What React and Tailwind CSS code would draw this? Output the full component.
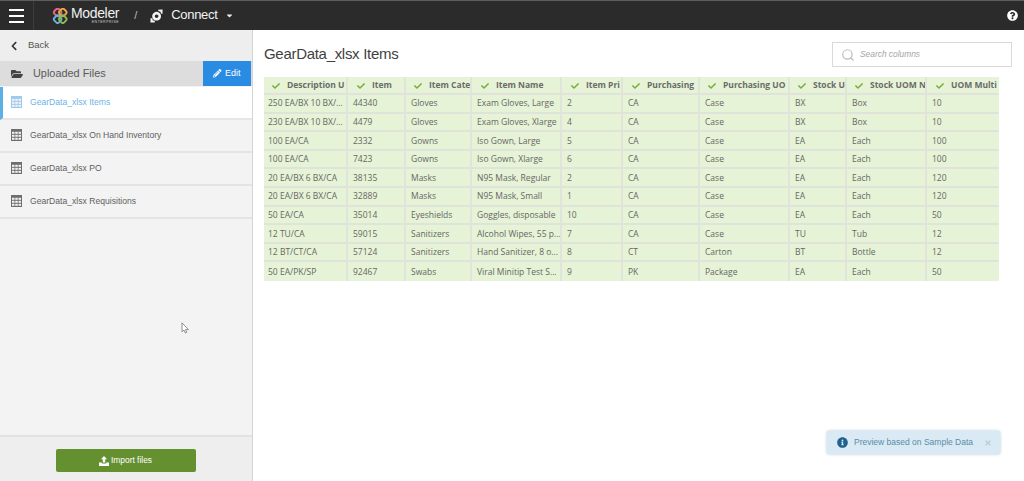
import React from "react";
import { FaCheck, FaPencilAlt, FaFolderOpen, FaChevronLeft, FaInfoCircle, FaQuestionCircle, FaTimes, FaCaretDown } from "react-icons/fa";
import { LuSearch } from "react-icons/lu";

const cols = [
  ["Description U", "pl-[8px]"],
  ["Item", "pl-[9px]"],
  ["Item Cate", "pl-[8px]"],
  ["Item Name", "pl-[9px]"],
  ["Item Pri", "pl-[9px]"],
  ["Purchasing", "pl-[9px]"],
  ["Purchasing UO", "pl-[8px]"],
  ["Stock U", "pl-[8px]"],
  ["Stock UOM N", "pl-[8px]"],
  ["UOM Multi", "pl-[9px]"],
];
const rows = [
  ["250 EA/BX 10 BX/...", "44340", "Gloves", "Exam Gloves, Large", "2", "CA", "Case", "BX", "Box", "10"],
  ["230 EA/BX 10 BX/...", "4479", "Gloves", "Exam Gloves, Xlarge", "4", "CA", "Case", "BX", "Box", "10"],
  ["100 EA/CA", "2332", "Gowns", "Iso Gown, Large", "5", "CA", "Case", "EA", "Each", "100"],
  ["100 EA/CA", "7423", "Gowns", "Iso Gown, Xlarge", "6", "CA", "Case", "EA", "Each", "100"],
  ["20 EA/BX 6 BX/CA", "38135", "Masks", "N95 Mask, Regular", "2", "CA", "Case", "EA", "Each", "120"],
  ["20 EA/BX 6 BX/CA", "32889", "Masks", "N95 Mask, Small", "1", "CA", "Case", "EA", "Each", "120"],
  ["50 EA/CA", "35014", "Eyeshields", "Goggles, disposable", "10", "CA", "Case", "EA", "Each", "50"],
  ["12 TU/CA", "59015", "Sanitizers", "Alcohol Wipes, 55 p...", "7", "CA", "Case", "TU", "Tub", "12"],
  ["12 BT/CT/CA", "57124", "Sanitizers", "Hand Sanitizer, 8 o...", "8", "CT", "Carton", "BT", "Bottle", "12"],
  ["50 EA/PK/SP", "92467", "Swabs", "Viral Minitip Test S...", "9", "PK", "Package", "EA", "Each", "50"],
];
const gridCols = "grid grid-cols-[84px_58px_66px_90px_61px_77px_90px_57px_80px_72px]";

function TableIcon({ color }) {
  return (
    <svg width="11" height="12" viewBox="0 0 11 12" className="shrink-0 mt-[-2px]">
      <rect x="0" y="0" width="11" height="12" fill={color} />
      {[1, 4.25, 7.5].map((x) =>
        [3, 6, 9].map((y) => <rect key={x + "-" + y} x={x} y={y - 0.2} width="2.5" height="2" fill="#f4f4f4" />)
      )}
    </svg>
  );
}

function FileRow({ label, active }) {
  return (
    <div className={active
      ? "h-[33px] flex items-center gap-[8px] pl-[8px] bg-white border-l-[3px] border-[#5bb0e8] text-[#6fb2e6] border-b-2 border-b-[#e6e6e6]"
      : "h-[33px] flex items-center gap-[8px] pl-[11px] text-[#5f5f5f] border-b-2 border-[#e4e4e4]"}>
      <TableIcon color={active ? "#9cc9ee" : "#6e6e6e"} />
      <span className="text-[8.6px]">{label}</span>
    </div>
  );
}

function Logo() {
  return (
    <svg width="16" height="16" viewBox="0 0 20 20" fill="none" strokeWidth="2.4">
      <rect x="3" y="1.5" width="8" height="8" rx="2.5" transform="rotate(45 7 5.5)" stroke="#e8697c" />
      <rect x="9.5" y="1.5" width="8" height="8" rx="2.5" transform="rotate(45 13.5 5.5)" stroke="#e7a54c" />
      <rect x="3" y="10" width="8" height="8" rx="2.5" transform="rotate(45 7 14)" stroke="#62b6dc" />
      <rect x="9.5" y="10" width="8" height="8" rx="2.5" transform="rotate(45 13.5 14)" stroke="#8dbb4f" />
    </svg>
  );
}

function ConnectIcon() {
  return (
    <svg width="13" height="14" viewBox="0 0 13 14" fill="#f4f4f4">
      <path d="M8 .8 L12.6 .4 L12.4 5 L11 4.6 L10.4 2.6 L8.6 2.2 Z" />
      <path d="M.6 9 L2.4 9.6 L2.8 11.4 L5 11.8 L4.6 13.4 L.4 13.6 Z" />
      <path fillRule="evenodd" d="M6.6 2.8 A4.4 4.4 0 1 1 6.59 2.8 Z M6.6 5.4 A1.8 1.8 0 1 0 6.61 5.4 Z" />
    </svg>
  );
}

function UploadIcon() {
  return (
    <svg width="10" height="10" viewBox="0 0 10 10" fill="#fff">
      <path d="M5 0 L8 3.2 H6.2 V6.4 H3.8 V3.2 H2 Z" />
      <path d="M0 6.4 H2.8 V7.4 H7.2 V6.4 H10 V10 H0 Z" />
    </svg>
  );
}

export default function App() {
  return (
    <div className="relative w-[1024px] h-[481px] overflow-hidden bg-white font-['Liberation_Sans',sans-serif]">
      <header className="h-[30px] bg-[#2b2b2b] border-t border-[#5c5c5c] flex items-center text-[#f2f2f2]">
        <div className="w-[34px] h-full flex flex-col justify-center items-center gap-[4px] border-r border-[#3d3d3d]">
          <span className="block w-[15px] h-[2px] bg-white" />
          <span className="block w-[15px] h-[2px] bg-white" />
          <span className="block w-[15px] h-[2px] bg-white" />
        </div>
        <div className="ml-[18px] flex items-center">
          <Logo />
          <div className="ml-[3px] flex flex-col items-end leading-none mt-[-1px]">
            <span className="text-[14px] leading-[14px] tracking-[-0.35px] text-[#f0f0f0]">Modeler</span>
            <span className="text-[3.5px] leading-[4px] tracking-[0.5px] text-[#d0d0d0]">ENTERPRISE</span>
          </div>
        </div>
        <span className="ml-[15px] text-[11px] text-[#bdbdbd]">/</span>
        <div className="ml-[13px] flex"><ConnectIcon /></div>
        <span className="ml-[8px] mt-[-1px] text-[13px] tracking-[-0.3px] text-[#f2f2f2]">Connect</span>
        <FaCaretDown className="ml-[7px] text-[9px] text-[#eeeeee]" />
        <FaQuestionCircle className="ml-auto mr-[6px] text-[11px] text-white" />
      </header>

      <div className="flex h-[451px]">
        <aside className="w-[253px] shrink-0 flex flex-col bg-[#f3f3f3] border-r border-[#d4d4d4]">
          <div className="h-[31px] bg-[#eeeeee] flex items-center pl-[9px] text-[#555555]">
            <FaChevronLeft className="text-[10px] text-[#333333]" />
            <span className="ml-[9px] text-[9.5px]">Back</span>
          </div>
          <div className="h-[25px] flex bg-[#dddddd] items-center">
            <FaFolderOpen className="ml-[11px] text-[12px] text-[#444444]" />
            <span className="ml-[10px] text-[10.9px] text-[#5a5a5a]">Uploaded Files</span>
            <div className="ml-auto mr-px w-[48px] h-full bg-[#2a8be2] text-white flex items-center justify-center gap-[3px]">
              <FaPencilAlt className="text-[8.5px]" />
              <span className="text-[9px]">Edit</span>
            </div>
          </div>
          <div className="h-px" />
          <FileRow label="GearData_xlsx Items" active />
          <FileRow label="GearData_xlsx On Hand Inventory" />
          <FileRow label="GearData_xlsx PO" />
          <FileRow label="GearData_xlsx Requisitions" />
          <div className="flex-1" />
          <div className="h-[46px] bg-[#eeeeee] border-t-2 border-[#e2e2e2] flex justify-center pt-[12px]">
            <div className="ml-[-1px] w-[140px] h-[23px] rounded-[2px] bg-[#64902f] text-white flex items-center justify-center gap-[2px]">
              <UploadIcon />
              <span className="text-[8.4px]">Import files</span>
            </div>
          </div>
        </aside>

        <main className="flex-1 min-w-0 pl-[11px] pr-[12px]">
          <div className="h-[47px] flex items-start justify-between">
            <h1 className="mt-[14px] text-[15px] tracking-[-0.3px] leading-5 text-[#3f3f3f]">GearData_xlsx Items</h1>
            <div className="mt-[12px] w-[180px] h-[25px] border border-[#d9d9d9] bg-white flex items-center pl-[8px]">
              <LuSearch className="text-[14px] text-[#bcbcbc]" />
              <span className="ml-[5px] text-[8.4px] italic text-[#a5a5a5]">Search columns</span>
            </div>
          </div>
          <div className="w-[735px] bg-[#e6f3d6] font-['Open_Sans',sans-serif] text-[#666666]">
            <div className={gridCols + " h-[18px] border-b-2 border-[#dfe3da]"}>
              {cols.map(([c, pad]) => (
                <div key={c} className={pad + " pt-[1px] border-r-2 border-[#e0e4db] last:border-r-0 overflow-hidden whitespace-nowrap flex items-center"}>
                  <FaCheck className="shrink-0 text-[8px] text-[#7cab3e]" />
                  <span className="ml-[7px] text-[8.5px] font-bold text-[#6b6b6b]">{c}</span>
                </div>
              ))}
            </div>
            {rows.map((r, ri) => (
              <div key={ri} className={gridCols + " h-[18.6px] border-b-2 border-[#dfe3da] last:border-b-0"}>
                {r.map((c, i) => (
                  <div key={i} className={(i === 0 ? "pl-[4px]" : "pl-[5px]") + " pt-[1px] border-r-2 border-[#e0e4db] last:border-r-0 overflow-hidden whitespace-nowrap flex items-center text-[8.5px]"}>
                    {c}
                  </div>
                ))}
              </div>
            ))}
          </div>
        </main>
      </div>

      <div className="absolute left-[827px] top-[431px] w-[173px] h-[23px] rounded-[2px] bg-[#d9eaf5] shadow-[0_0_3px_rgba(90,130,170,0.5)] flex items-center pl-[10px] whitespace-nowrap text-[#5b8aa8]">
        <FaInfoCircle className="text-[11px] text-[#21618c]" />
        <span className="ml-[6px] text-[8.5px]">Preview based on Sample Data</span>
        <FaTimes className="ml-[11px] text-[8px] text-[#b9cfde]" />
      </div>

      <svg className="absolute left-[181px] top-[322px]" width="9" height="12" viewBox="0 0 9 12">
        <path d="M1 .8 V9.8 L3 8 L4.4 11 L5.8 10.4 L4.5 7.6 H7.4 Z" fill="#fff" stroke="#777" strokeWidth="0.8" />
      </svg>
    </div>
  );
}
